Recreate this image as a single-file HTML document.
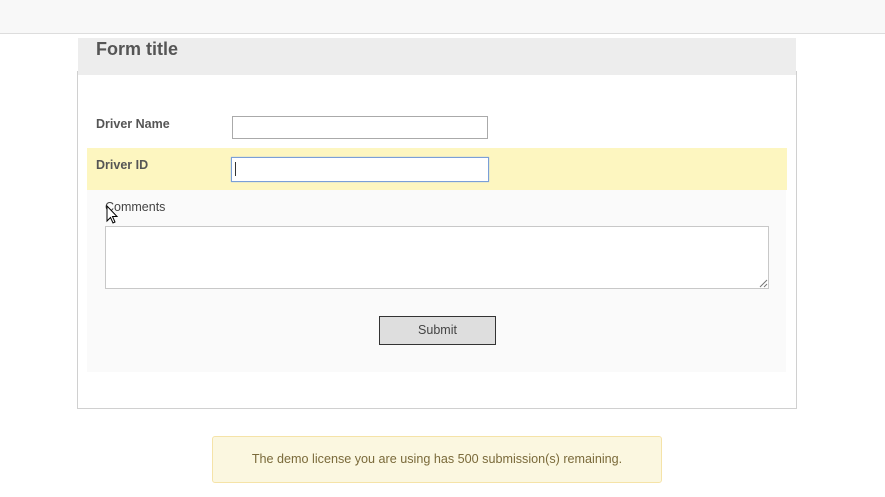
<!DOCTYPE html>
<html><head><meta charset="utf-8"><style>
*{box-sizing:border-box;margin:0;padding:0}
body{width:885px;height:497px;background:#fff;font-family:"Liberation Sans",Arial,sans-serif;position:relative;overflow:hidden;color:#444}
.a{position:absolute}
</style></head><body>
<div class="a" style="left:0;top:0;width:885px;height:34px;background:#f8f8f8;border-bottom:1px solid #ddd"></div>
<div class="a" style="left:77px;top:71px;width:720px;height:338px;border:1px solid #d0d0d0"></div>
<div class="a" style="left:78px;top:38px;width:718px;height:37px;background:#ededed"></div>
<div class="a" style="left:96px;top:39px;font-size:18px;font-weight:bold;color:#555">Form title</div>
<div class="a" style="left:96px;top:117px;font-size:12.5px;font-weight:bold;color:#555">Driver Name</div>
<div class="a" style="left:232px;top:116px;width:256px;height:23px;border:1px solid #aaa;background:#fff"></div>
<div class="a" style="left:87px;top:148px;width:700px;height:42px;background:#fdf6c0"></div>
<div class="a" style="left:96px;top:158px;font-size:12.5px;font-weight:bold;color:#555">Driver ID</div>
<div class="a" style="left:231px;top:157px;width:258px;height:25px;border:1px solid #7a9fd8;background:#fff;box-shadow:0 0 1px #9ab8e8"></div>
<div class="a" style="left:235px;top:162px;width:1px;height:14px;background:#333"></div>
<div class="a" style="left:87px;top:190px;width:699px;height:182px;background:#fafafa"></div>
<div class="a" style="left:105px;top:200px;font-size:12.5px;color:#444">Comments</div>
<svg class="a" style="left:106px;top:205px" width="14" height="20" viewBox="0 0 14 20"><path d="M1 1 L1 16 L4.5 12.5 L7 18 L9 17 L6.5 11.5 L11 11.5 Z" fill="#fff" stroke="#000" stroke-width="1"/></svg>
<div class="a" style="left:105px;top:226px;width:664px;height:63px;border:1px solid #c8c8c8;background:#fff"></div>
<svg class="a" style="left:759px;top:279px" width="9" height="9"><path d="M8 1 L1 8 M8 5 L5 8" stroke="#777" stroke-width="1"/></svg>
<div class="a" style="left:379px;top:316px;width:117px;height:29px;border:1px solid #333;background:#dedede;font-size:12.5px;color:#444;text-align:center;line-height:27px">Submit</div>
<div class="a" style="left:212px;top:436px;width:450px;height:47px;border:1px solid #f5e3a8;border-radius:3px;background:#fbf7e0;font-size:12.6px;color:#7a6a3a;text-align:center;line-height:45px">The demo license you are using has 500 submission(s) remaining.</div>
</body></html>
